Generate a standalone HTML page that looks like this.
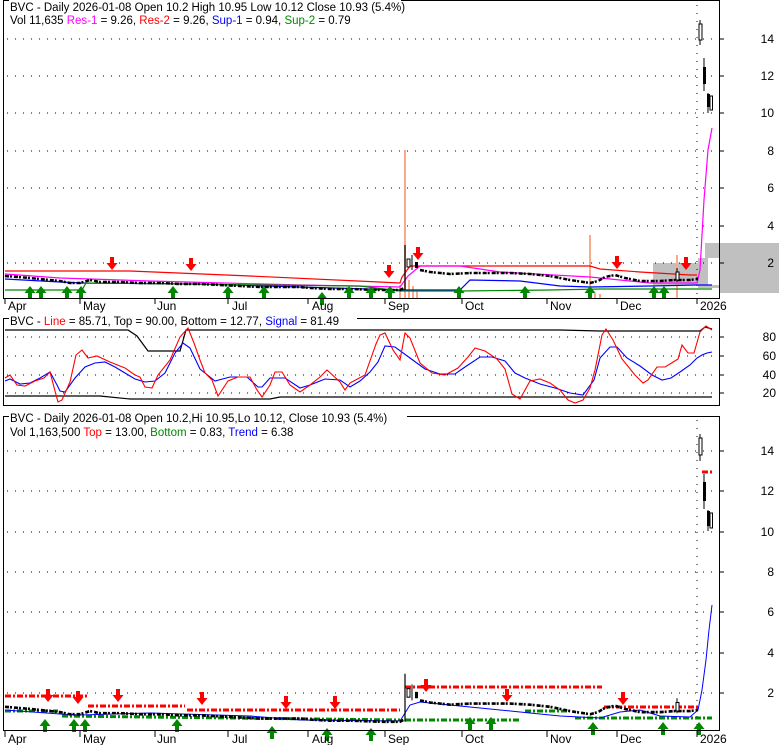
<!DOCTYPE html>
<html><head><meta charset="utf-8"><style>
html,body{margin:0;padding:0;background:#fff;}
svg{display:block;font-family:"Liberation Sans",Arial,sans-serif;}
</style></head><body>
<svg width="780" height="745" viewBox="0 0 780 745" xmlns="http://www.w3.org/2000/svg">
<defs>
<path id="dn" d="M-2,0 h4 v6 h3.5 l-5.5,7 l-5.5,-7 h3.5z" fill="#f00"/>
<path id="up" d="M-2,13 h4 v-6 h3.5 l-5.5,-7 l-5.5,7 h3.5z" fill="#080"/>
<g id="price">
<polyline fill="none" stroke="#000" stroke-width="2.5" stroke-dasharray="4,1,2,2" points="5,276 30,278 50,280 60,281 70,283 80,283 90,280 100,282 120,282 140,283 160,283 180,284 200,284 220,285 240,286 260,287 280,287 300,287 310,288 330,289 350,289 380,290 400,290 404,288"/>
<line x1="405" y1="245" x2="405" y2="290" stroke="#000" stroke-width="1.2"/>
<rect x="407" y="259" width="3" height="8" fill="#fff" stroke="#000"/>
<line x1="412" y1="255" x2="412" y2="270" stroke="#000"/>
<rect x="415" y="262" width="3" height="6" fill="#000"/>
<polyline fill="none" stroke="#000" stroke-width="2.5" stroke-dasharray="4,1,2,2" points="420,270 430,272 450,274 470,273 490,273 510,273 530,274 550,276 570,280 590,283 598,281 605,277 615,275 625,278 640,281 660,281 675,280 690,280 698,279"/>
<line x1="677" y1="268" x2="677" y2="282" stroke="#000"/>
<rect x="676" y="272" width="3" height="8" fill="#fff" stroke="#000"/>
</g>
</defs>

<!-- PANEL 1 -->
<polygon points="705,243 779,243 779,293 719,293 719,288 700,288 700,263 653,263 653,285 719,285 719,258 705,258" fill="#c0c0c0"/>
<rect x="653" y="263" width="50" height="22" fill="#c0c0c0"/>
<rect x="698" y="258" width="10" height="30" fill="#c0c0c0"/>
<g stroke="#000" stroke-dasharray="1,7" stroke-width="1">
<line x1="7" y1="39" x2="719" y2="39"/><line x1="7" y1="76" x2="719" y2="76"/><line x1="7" y1="113" x2="719" y2="113"/><line x1="7" y1="151" x2="719" y2="151"/><line x1="7" y1="188" x2="719" y2="188"/><line x1="7" y1="226" x2="719" y2="226"/><line x1="7" y1="263" x2="719" y2="263"/>
<line x1="697" y1="5" x2="697" y2="298"/>
</g>
<g fill="#f9a98c">
<rect x="404" y="150" width="2" height="148"/><rect x="589" y="235" width="2" height="63"/><rect x="676" y="255" width="2" height="43"/>
<rect x="399" y="285" width="2" height="13"/><rect x="408" y="280" width="2" height="18"/><rect x="412" y="286" width="2" height="12"/><rect x="416" y="290" width="2" height="8"/><rect x="594" y="293" width="2" height="5"/><rect x="599" y="294" width="2" height="4"/>
</g>
<polyline fill="none" stroke="#f00" stroke-width="1.2" points="5,271 130,271 250,276 400,283 402,277 410,266 590,266 600,269 640,272 690,275 697,275"/>
<polyline fill="none" stroke="#f0f" stroke-width="1.2" points="5,274 60,278 150,281 300,285 400,287 408,276 420,266 460,266 500,272 590,277 620,280 650,283 697,283 700,270 704,200 708,150 712,128"/>
<polyline fill="none" stroke="#00f" stroke-width="1.2" points="5,279 60,282 82,283 200,284 300,287 400,290 460,290 470,280 520,281 560,286 590,287 650,286 697,285 712,285"/>
<polyline fill="none" stroke="#080" stroke-width="1.2" points="5,290 82,290 86,283 360,286 400,291 460,291 550,290 600,289 700,289 712,289"/>
<use href="#price"/>
<line x1="700" y1="20" x2="700" y2="45" stroke="#000"/><rect x="699" y="24" width="3" height="16" fill="#fff" stroke="#000"/>
<line x1="704" y1="58" x2="704" y2="91" stroke="#000"/><rect x="703" y="67" width="3" height="17" fill="#000"/>
<line x1="708" y1="93" x2="708" y2="113" stroke="#000"/><rect x="707" y="94" width="3" height="13" fill="#000"/>
<rect x="710" y="96" width="2.5" height="14" fill="#fff" stroke="#000"/>
<g>
<use href="#dn" x="112" y="257"/><use href="#dn" x="191" y="258"/><use href="#dn" x="389" y="265"/><use href="#dn" x="418" y="247"/><use href="#dn" x="617" y="256"/><use href="#dn" x="686" y="257"/>
<use href="#up" x="30" y="286"/><use href="#up" x="41" y="286"/><use href="#up" x="67" y="286"/><use href="#up" x="81" y="286"/><use href="#up" x="173" y="286"/><use href="#up" x="228" y="286"/><use href="#up" x="264" y="286"/><use href="#up" x="322" y="292"/><use href="#up" x="349" y="286"/><use href="#up" x="371" y="286"/><use href="#up" x="390" y="286"/><use href="#up" x="459" y="286"/><use href="#up" x="525" y="286"/><use href="#up" x="590" y="286"/><use href="#up" x="654" y="286"/><use href="#up" x="664" y="286"/>
</g>
<rect x="3.5" y="0.5" width="716" height="298" fill="none" stroke="#000"/>
<g stroke="#000"><line x1="719" y1="39" x2="724" y2="39"/><line x1="719" y1="76" x2="724" y2="76"/><line x1="719" y1="113" x2="724" y2="113"/><line x1="719" y1="151" x2="724" y2="151"/><line x1="719" y1="188" x2="724" y2="188"/><line x1="719" y1="226" x2="724" y2="226"/><line x1="719" y1="263" x2="724" y2="263"/></g>
<g font-size="12" fill="#000" text-anchor="end">
<text x="774" y="43">14</text><text x="774" y="80">12</text><text x="774" y="117">10</text><text x="774" y="155">8</text><text x="774" y="192">6</text><text x="774" y="230">4</text><text x="774" y="267">2</text>
</g>
<rect x="9" y="0" width="392" height="13" fill="#fff"/>
<text x="10" y="11" font-size="11.5">BVC - Daily 2026-01-08 Open 10.2  High 10.95  Low 10.12  Close 10.93 (5.4%)</text>
<text x="10" y="24" font-size="11.5">Vol 11,635 <tspan fill="#f0f">Res-1</tspan> = 9.26, <tspan fill="#f00">Res-2</tspan> = 9.26, <tspan fill="#00f">Sup-1</tspan> = 0.94, <tspan fill="#080">Sup-2</tspan> = 0.79</text>
<g stroke="#000"><line x1="5" y1="299" x2="5" y2="304"/><line x1="80" y1="299" x2="80" y2="304"/><line x1="155" y1="299" x2="155" y2="304"/><line x1="228" y1="299" x2="228" y2="304"/><line x1="308" y1="299" x2="308" y2="304"/><line x1="385" y1="299" x2="385" y2="304"/><line x1="462" y1="299" x2="462" y2="304"/><line x1="547" y1="299" x2="547" y2="304"/><line x1="617" y1="299" x2="617" y2="304"/><line x1="697" y1="299" x2="697" y2="304"/></g>
<g font-size="12"><text x="8" y="310">Apr</text><text x="83" y="310">May</text><text x="157" y="310">Jun</text><text x="232" y="310">Jul</text><text x="312" y="310">Aug</text><text x="388" y="310">Sep</text><text x="465" y="310">Oct</text><text x="550" y="310">Nov</text><text x="620" y="310">Dec</text><text x="700" y="310">2026</text></g>

<!-- PANEL 2 -->
<g stroke="#000" stroke-dasharray="1,7"><line x1="7" y1="337" x2="719" y2="337"/><line x1="7" y1="356" x2="719" y2="356"/><line x1="7" y1="375" x2="719" y2="375"/><line x1="7" y1="393" x2="719" y2="393"/></g>
<polyline fill="none" stroke="#000" stroke-width="1.2" points="5,330 128,330 137,336 148,351 180,351 186,330 440,330 560,330 600,331 700,331 705,327 712,329"/>
<polyline fill="none" stroke="#000" stroke-width="1.2" points="5,396 100,396 130,399 270,399 280,397 700,397 712,397"/>
<polyline fill="none" stroke="#00f" stroke-width="1.1" points="5,381 10,379 20,384 30,383 40,378 50,372 57,385 60,391 65,392 75,378 85,367 95,363 105,362 115,367 125,373 135,379 145,382 155,381 165,373 175,353 183,343 190,348 200,369 215,381 230,377 247,377 258,387 262,387 270,378 285,378 300,388 310,385 325,379 340,380 350,387 360,381 370,372 378,362 385,346 395,347 410,358 425,369 440,374 455,374 465,367 480,357 492,357 505,361 515,373 525,378 540,384 555,388 570,393 583,395 594,380 600,358 610,347 617,347 627,358 640,366 652,375 662,380 671,378 680,372 690,365 697,358 702,355 707,353 712,352"/>
<polyline fill="none" stroke="#f00" stroke-width="1.1" points="5,378 10,375 17,385 25,386 35,381 44,378 50,372 55,391 58,402 62,400 70,382 76,355 82,350 88,358 97,356 110,362 125,368 135,375 140,377 145,387 152,388 158,375 170,360 180,337 188,328 194,343 200,360 205,373 212,380 218,396 228,381 238,377 250,377 257,390 262,397 270,385 275,372 282,372 290,385 300,392 310,385 320,377 327,370 340,382 345,390 350,383 365,375 376,344 380,335 385,333 393,350 400,360 405,333 410,338 420,363 432,373 445,375 458,368 468,357 475,348 485,351 497,359 505,369 512,394 520,399 530,381 540,379 550,383 560,390 568,400 575,403 583,400 590,388 595,370 602,335 606,329 613,340 622,359 635,375 643,383 648,380 657,367 665,367 670,364 678,359 682,345 688,353 694,353 700,332 706,326 712,330"/>
<rect x="3.5" y="318.5" width="716" height="87" fill="none" stroke="#000"/>
<g stroke="#000"><line x1="719" y1="337" x2="724" y2="337"/><line x1="719" y1="356" x2="724" y2="356"/><line x1="719" y1="375" x2="724" y2="375"/><line x1="719" y1="393" x2="724" y2="393"/></g>
<g font-size="12" text-anchor="end"><text x="776" y="341">80</text><text x="776" y="360">60</text><text x="776" y="379">40</text><text x="776" y="397">20</text></g>
<rect x="9" y="313" width="348" height="13" fill="#fff"/>
<text x="10" y="325" font-size="11.5">BVC - <tspan fill="#f00">Line</tspan> = 85.71, Top = 90.00, Bottom = 12.77, <tspan fill="#00f">Signal</tspan> = 81.49</text>

<!-- PANEL 3 -->
<g stroke="#000" stroke-dasharray="1,7"><line x1="7" y1="451" x2="719" y2="451"/><line x1="7" y1="491" x2="719" y2="491"/><line x1="7" y1="532" x2="719" y2="532"/><line x1="7" y1="572" x2="719" y2="572"/><line x1="7" y1="612" x2="719" y2="612"/><line x1="7" y1="653" x2="719" y2="653"/><line x1="7" y1="693" x2="719" y2="693"/><line x1="697" y1="420" x2="697" y2="731"/></g>
<g stroke-width="3" stroke-dasharray="6,2,2,2" fill="none">
<g stroke="#f00"><line x1="5" y1="696" x2="87" y2="696"/><line x1="88" y1="706" x2="185" y2="706"/><line x1="187" y1="710" x2="400" y2="710"/><line x1="405" y1="687" x2="602" y2="687"/><line x1="604" y1="707" x2="700" y2="707"/><line x1="702" y1="472" x2="712" y2="472"/></g>
<g stroke="#080"><line x1="5" y1="711" x2="58" y2="711"/><line x1="62" y1="716" x2="400" y2="720"/><line x1="405" y1="720" x2="520" y2="720"/><line x1="525" y1="711" x2="570" y2="711"/><line x1="575" y1="718" x2="712" y2="718"/></g>
</g>
<polyline fill="none" stroke="#00f" stroke-width="1" points="5,710 60,714 80,715 150,713 250,716 300,720 400,721 410,705 420,702 470,707 520,712 560,716 600,718 620,712 640,710 660,716 690,717 698,710 702,690 706,660 709,630 712,605"/>
<g transform="translate(0,412.3) scale(1,1.067)"><use href="#price"/></g>
<line x1="700" y1="434" x2="700" y2="461" stroke="#000"/><rect x="699" y="438" width="3" height="17" fill="#fff" stroke="#000"/>
<line x1="704" y1="474" x2="704" y2="509" stroke="#000"/><rect x="703" y="482" width="3" height="19" fill="#000"/>
<line x1="708" y1="510" x2="708" y2="531" stroke="#000"/><rect x="707" y="511" width="3" height="15" fill="#000"/>
<rect x="710" y="513" width="2.5" height="15" fill="#fff" stroke="#000"/>
<g>
<use href="#dn" x="48" y="689"/><use href="#dn" x="78" y="691"/><use href="#dn" x="118" y="689"/><use href="#dn" x="202" y="692"/><use href="#dn" x="286" y="696"/><use href="#dn" x="335" y="696"/><use href="#dn" x="426" y="679"/><use href="#dn" x="507" y="689"/><use href="#dn" x="623" y="692"/>
<use href="#up" x="45" y="719"/><use href="#up" x="74" y="719"/><use href="#up" x="85" y="719"/><use href="#up" x="177" y="719"/><use href="#up" x="272" y="726"/><use href="#up" x="327" y="728"/><use href="#up" x="371" y="728"/><use href="#up" x="470" y="717"/><use href="#up" x="491" y="717"/><use href="#up" x="593" y="722"/><use href="#up" x="663" y="722"/><use href="#up" x="699" y="722"/>
</g>
<rect x="3.5" y="416.5" width="716" height="314" fill="none" stroke="#000"/>
<g stroke="#000"><line x1="719" y1="451" x2="724" y2="451"/><line x1="719" y1="491" x2="724" y2="491"/><line x1="719" y1="532" x2="724" y2="532"/><line x1="719" y1="572" x2="724" y2="572"/><line x1="719" y1="612" x2="724" y2="612"/><line x1="719" y1="653" x2="724" y2="653"/><line x1="719" y1="693" x2="724" y2="693"/></g>
<g font-size="12" text-anchor="end"><text x="774" y="455">14</text><text x="774" y="495">12</text><text x="774" y="536">10</text><text x="774" y="576">8</text><text x="774" y="616">6</text><text x="774" y="657">4</text><text x="774" y="697">2</text></g>
<rect x="9" y="410" width="398" height="13" fill="#fff"/>
<text x="10" y="422" font-size="11.5">BVC - Daily 2026-01-08 Open 10.2,Hi 10.95,Lo 10.12, Close 10.93 (5.4%)</text>
<text x="10" y="436" font-size="11.5">Vol 1,163,500 <tspan fill="#f00">Top</tspan> = 13.00, <tspan fill="#080">Bottom</tspan> = 0.83, <tspan fill="#00f">Trend</tspan> = 6.38</text>
<g stroke="#000"><line x1="5" y1="731" x2="5" y2="737"/><line x1="80" y1="731" x2="80" y2="737"/><line x1="155" y1="731" x2="155" y2="737"/><line x1="228" y1="731" x2="228" y2="737"/><line x1="308" y1="731" x2="308" y2="737"/><line x1="385" y1="731" x2="385" y2="737"/><line x1="462" y1="731" x2="462" y2="737"/><line x1="547" y1="731" x2="547" y2="737"/><line x1="617" y1="731" x2="617" y2="737"/><line x1="697" y1="731" x2="697" y2="737"/></g>
<g font-size="12"><text x="8" y="743">Apr</text><text x="83" y="743">May</text><text x="157" y="743">Jun</text><text x="232" y="743">Jul</text><text x="312" y="743">Aug</text><text x="388" y="743">Sep</text><text x="465" y="743">Oct</text><text x="550" y="743">Nov</text><text x="620" y="743">Dec</text><text x="700" y="743">2026</text></g>
</svg>
</body></html>
